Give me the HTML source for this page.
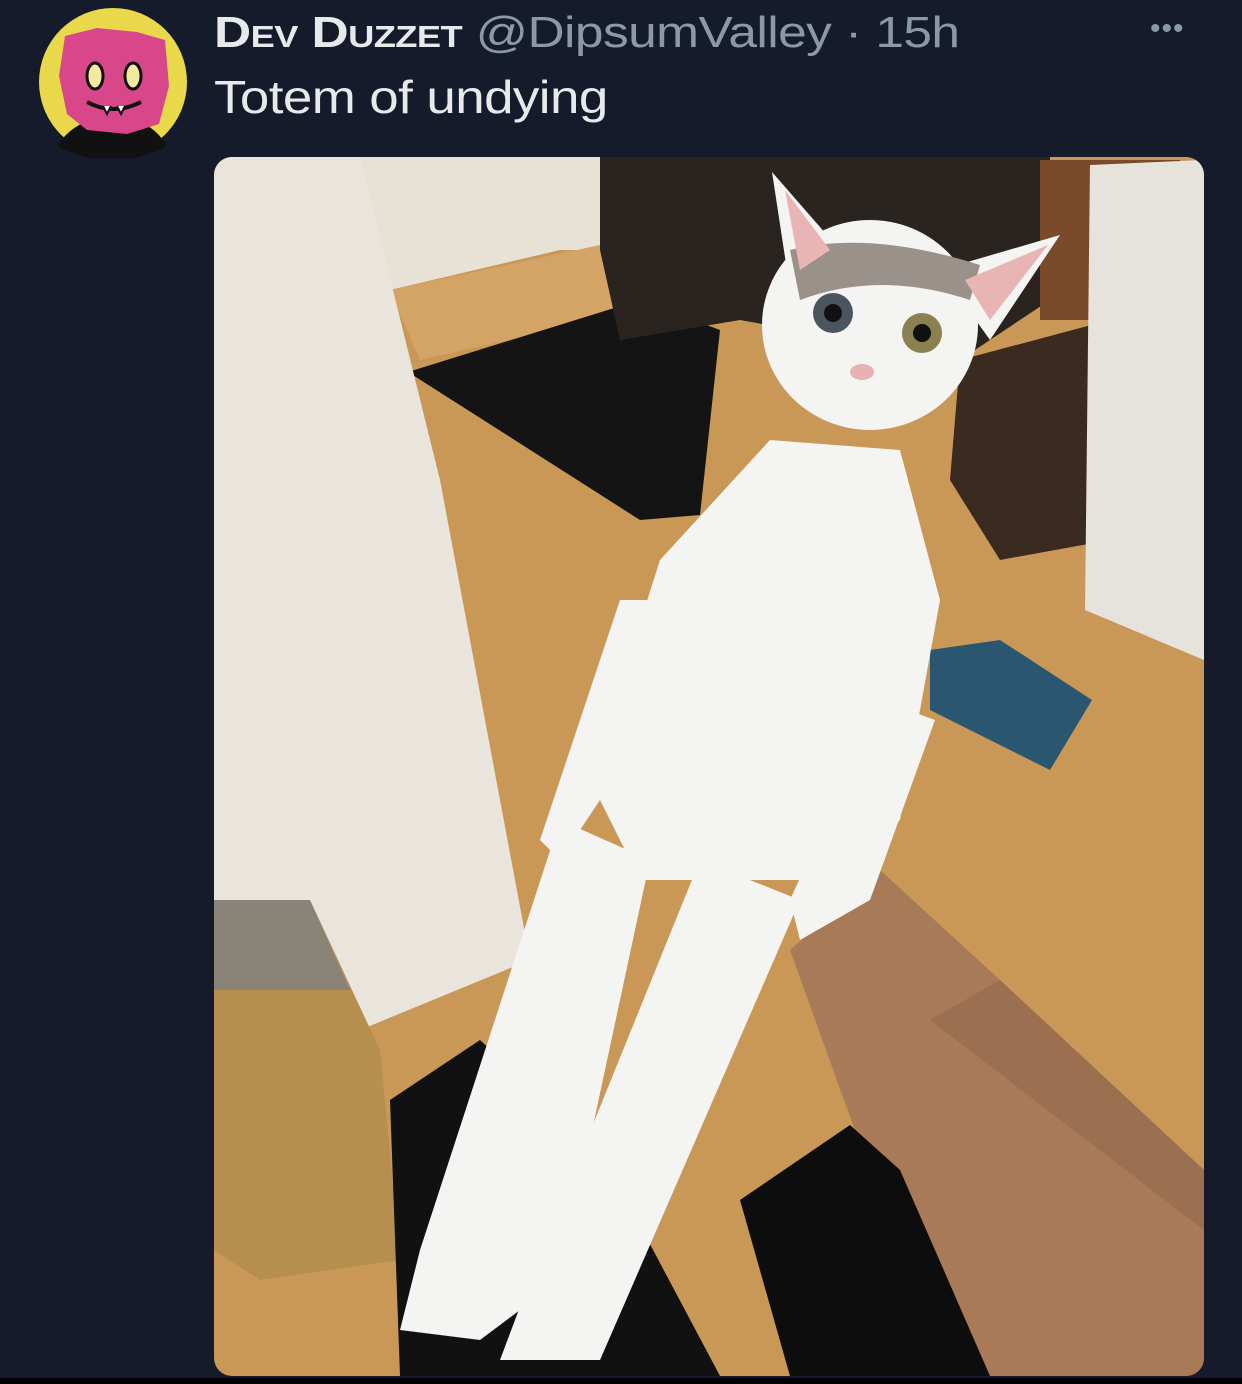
<!DOCTYPE html>
<html><head><meta charset="utf-8"><style>
html,body{margin:0;padding:0;background:#151b2a;width:1242px;height:1384px;overflow:hidden;font-family:"Liberation Sans",sans-serif}
.name{position:absolute;left:214px;top:8px;font-size:44px;color:#e7e9ea;white-space:nowrap;letter-spacing:-0.5px;transform:scaleX(1.17);transform-origin:0 0}
.name b{font-weight:bold;font-variant:small-caps}
.name span{color:#8b98a5}
.txt{position:absolute;left:214px;top:70px;font-size:46px;color:#e7e9ea;letter-spacing:-0.5px;transform:scaleX(1.15);transform-origin:0 0}
.dots{position:absolute;left:1150px;top:12px;font-size:30px;color:#8b98a5;letter-spacing:1px}
.photo{position:absolute;left:214px;top:157px;width:990px;height:1219px;border-radius:18px;overflow:hidden}
.bottom{position:absolute;left:0;top:1378px;width:1242px;height:6px;background:#000}
</style></head><body>
<svg style="position:absolute;left:37px;top:6px" width="152" height="152" viewBox="0 0 152 152">
<circle cx="76" cy="76" r="74" fill="#e8d84a"/>
<path d="M20 140 Q40 110 76 112 Q112 110 130 140 Q100 156 76 152 Q50 156 20 140Z" fill="#111"/>
<path d="M28 30 L60 22 L100 26 L128 34 L132 80 L122 118 L90 128 L50 124 L30 108 L22 70Z" fill="#d8478a"/>
<ellipse cx="58" cy="70" rx="8" ry="13" fill="#f3e9a0" stroke="#111" stroke-width="3"/>
<ellipse cx="96" cy="70" rx="8" ry="13" fill="#f3e9a0" stroke="#111" stroke-width="3"/>
<path d="M50 96 Q76 110 104 96" stroke="#111" stroke-width="4" fill="none"/>
<path d="M66 100 L70 108 L74 100 M80 100 L84 108 L88 100" fill="#fff" stroke="#111" stroke-width="2"/>
</svg>
<div class="name"><b>Dev Duzzet</b> <span>@DipsumValley · 15h</span></div>
<div class="dots">•••</div>
<div class="txt">Totem of undying</div>
<div class="photo">
<svg width="990" height="1219" viewBox="214 157 990 1219">
<rect x="214" y="157" width="990" height="1219" fill="#c99856"/>
<polygon points="360,157 740,157 740,250 560,250 390,290 360,290" fill="#e8e2d6"/>
<polygon points="390,290 600,245 660,260 640,310 420,360" fill="#d4a466"/>
<polygon points="408,372 640,300 720,330 700,515 640,520" fill="#141414"/>
<polygon points="600,157 1050,157 1050,300 960,360 740,320 620,340 600,250" fill="#2a2420"/>
<polygon points="1040,160 1180,160 1180,320 1040,320" fill="#7a4a2a"/>
<polygon points="960,360 1110,320 1110,540 1000,560 950,480" fill="#3a2a20"/>
<polygon points="1090,165 1204,160 1204,660 1085,610" fill="#e6e3dc"/>
<polygon points="214,157 360,157 440,480 530,960 360,1030 214,1050" fill="#e9e5dc"/>
<polygon points="214,900 310,900 380,1050 400,1260 260,1280 214,1250" fill="#b68e4e"/>
<polygon points="214,900 310,900 350,990 214,990" fill="#8a8478"/>
<polygon points="930,650 1000,640 1092,700 1050,770 930,710" fill="#2a5670"/>
<polygon points="790,950 880,870 1000,980 1204,1170 1204,1376 960,1376 880,1200" fill="#a87a58"/>
<polygon points="390,1100 480,1040 600,1150 720,1376 400,1376" fill="#111"/>
<polygon points="740,1200 850,1125 900,1170 990,1376 790,1376" fill="#0d0d0d"/>
<g fill="#f4f4f2">
<ellipse cx="870" cy="325" rx="108" ry="105"/>
<polygon points="772,172 840,250 790,290"/>
<polygon points="1060,235 990,340 940,270"/>
<polygon points="660,560 770,440 900,450 940,600 900,820 830,880 640,880 590,780"/>
<polygon points="560,820 650,860 560,1280 480,1340 400,1330 420,1250"/>
<polygon points="700,860 800,900 600,1360 500,1360 530,1280"/>
<polygon points="880,700 935,720 870,900 800,940 790,900"/>
<polygon points="620,600 660,600 600,800 560,860 540,840"/>
</g>
<path d="M790 250 Q870 230 980 265 L970 300 Q880 270 800 300Z" fill="#9a928a"/>
<circle cx="833" cy="313" r="20" fill="#4a5560"/><circle cx="833" cy="313" r="9" fill="#111"/>
<circle cx="922" cy="333" r="20" fill="#8a8050"/><circle cx="922" cy="333" r="9" fill="#111"/>
<ellipse cx="862" cy="372" rx="12" ry="8" fill="#e8b0b0"/>
<polygon points="785,190 830,250 800,270" fill="#e8b4b4"/>
<polygon points="1048,245 990,320 965,280" fill="#e8b4b4"/>
<polygon points="930,1020 1000,980 1204,1170 1204,1230" fill="#8e6446" opacity="0.5"/>
</svg>
</div>
<div class="bottom"></div>
</body></html>
